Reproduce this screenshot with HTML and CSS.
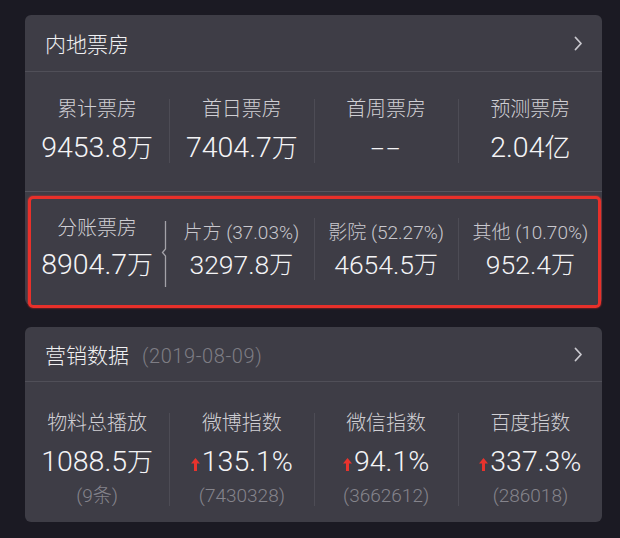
FILE: index.html
```html
<!DOCTYPE html>
<html lang="zh-CN">
<head>
    <meta charset="UTF-8">
    <meta name="viewport" content="width=device-width, initial-scale=1.0">
    <title>票房数据</title>
    <link rel="stylesheet" href="styles.css">
</head>
<body>
    <div class="card card-box">
        <div class="card-head">
            <span class="card-title">内地票房</span>
            <svg class="chevron" width="9" height="15" viewBox="0 0 9 15"><path d="M1.5 1.5 L7 7.5 L1.5 13.5" fill="none" stroke="#c9c8ce" stroke-width="1.8" stroke-linecap="round" stroke-linejoin="round"/></svg>
        </div>
        <div class="stats stats-main">
            <div class="stat">
                <div class="stat-label">累计票房</div>
                <div class="stat-value">9453.8<span class="unit">万</span></div>
            </div>
            <div class="stat">
                <div class="stat-label">首日票房</div>
                <div class="stat-value">7404.7<span class="unit">万</span></div>
            </div>
            <div class="stat">
                <div class="stat-label">首周票房</div>
                <div class="stat-value"><span class="dash">--</span></div>
            </div>
            <div class="stat">
                <div class="stat-label">预测票房</div>
                <div class="stat-value">2.04<span class="unit">亿</span></div>
            </div>
        </div>
        <!-- 分账票房，红框标注 -->
        <div class="stats stats-split">
            <div class="stat stat-total">
                <div class="stat-inner">
                    <div class="stat-label">分账票房</div>
                    <div class="stat-value">8904.7<span class="unit">万</span></div>
                </div>
                <svg class="brace" width="8" height="66" viewBox="0 0 8 66"><path d="M4.5 0 V28 L1.5 31.5 L4.5 35 V66" fill="none" stroke="#a3a2a8" stroke-width="1.3"/></svg>
            </div>
            <div class="stat stat-part">
                <div class="stat-label">片方 (37.03%)</div>
                <div class="stat-value">3297.8<span class="unit">万</span></div>
            </div>
            <div class="stat stat-part">
                <div class="stat-label">影院 (52.27%)</div>
                <div class="stat-value">4654.5<span class="unit">万</span></div>
            </div>
            <div class="stat stat-part">
                <div class="stat-label">其他 (10.70%)</div>
                <div class="stat-value">952.4<span class="unit">万</span></div>
            </div>
        </div>
    </div>

    <div class="card card-market">
        <div class="card-head">
            <span class="card-title">营销数据<span class="card-date">(2019-08-09)</span></span>
            <svg class="chevron" width="9" height="15" viewBox="0 0 9 15"><path d="M1.5 1.5 L7 7.5 L1.5 13.5" fill="none" stroke="#c9c8ce" stroke-width="1.8" stroke-linecap="round" stroke-linejoin="round"/></svg>
        </div>
        <div class="stats stats-market">
            <div class="stat">
                <div class="stat-label">物料总播放</div>
                <div class="stat-value">1088.5<span class="unit">万</span></div>
                <div class="stat-sub">(9条)</div>
            </div>
            <div class="stat">
                <div class="stat-label">微博指数</div>
                <div class="stat-value"><svg class="up" width="9" height="13" viewBox="0 0 9 13"><path d="M4.5 0 L9 5.5 H6 V13 H3 V5.5 H0 Z" fill="#e8332d"/></svg>135.1%</div>
                <div class="stat-sub">(7430328)</div>
            </div>
            <div class="stat">
                <div class="stat-label">微信指数</div>
                <div class="stat-value"><svg class="up" width="9" height="13" viewBox="0 0 9 13"><path d="M4.5 0 L9 5.5 H6 V13 H3 V5.5 H0 Z" fill="#e8332d"/></svg>94.1%</div>
                <div class="stat-sub">(3662612)</div>
            </div>
            <div class="stat">
                <div class="stat-label">百度指数</div>
                <div class="stat-value"><svg class="up" width="9" height="13" viewBox="0 0 9 13"><path d="M4.5 0 L9 5.5 H6 V13 H3 V5.5 H0 Z" fill="#e8332d"/></svg>337.3%</div>
                <div class="stat-sub">(286018)</div>
            </div>
        </div>
    </div>
</body>
</html>
```

FILE: styles.css
```css
body { margin: 0; padding: 15px 18px 15px 25px; background: #1b1a23; font-family: Roboto, "Noto Sans CJK SC", sans-serif; font-weight: 300; color: #f3f3f5; }
.card { width: 577px; background: #3e3d46; border-radius: 6px; }
.card-market { margin-top: 22px; }
.card-head { display: flex; align-items: center; justify-content: space-between; height: 56px; padding: 0 19px 0 20px; border-bottom: 1px solid #504f58; }
.card-market .card-head { height: 54px; }
.card-title { font-size: 21px; color: #f0f0f2; display: flex; align-items: baseline; }
.card-date { font-size: 20px; letter-spacing: 0.6px; color: #7e7d85; margin-left: 13px; }
.stats { display: grid; grid-template-columns: repeat(4, 1fr); }
.stat { display: flex; flex-direction: column; align-items: center; text-align: center; white-space: nowrap; }
.stat + .stat { border-left: 1px solid #4d4c55; }
.stat-label { font-size: 20px; line-height: 20px; color: #d0cfd4; }
.stat-value { font-size: 28.5px; line-height: 30px; color: #f4f4f6; display: flex; align-items: center; }
.unit { font-size: 26px; }
.dash { letter-spacing: 1px; transform: scaleX(1.7); }
.stat-sub { font-size: 19px; line-height: 20px; color: #85848c; margin-top: 9px; }

.stats-main { padding: 27px 0 28px; border-bottom: 1px solid #56555e; }
.stats-main .stat-value { margin-top: 14px; }

.stats-split { position: relative; padding: 26px 0 25px; }
.stats-split::after { content: ""; position: absolute; top: 4px; left: 3px; right: 1px; bottom: -3px; border: 3px solid #e8302a; border-radius: 5px; box-shadow: 0 0 2px #e8302a; }
.stat-total { flex-direction: row; align-items: flex-start; padding-left: 8px; }
.stat-inner { flex: 1; display: flex; flex-direction: column; align-items: center; }
.stat-total .stat-value { margin-top: 12px; }
.brace { margin: 3px 0 -7px; flex: none; }
.stat-part .stat-label { font-size: 19px; margin-top: 5px; color: #c9c8ce; }
.stat-part .stat-value { font-size: 26.5px; margin-top: 7px; }
.stat-part .unit { font-size: 24px; }
.stats-split .stat-total + .stat { border-left: none; }

.stats-market { padding: 31px 0 16px; }
.stats-market .stat-value { margin-top: 14px; }
.up { margin-right: 2px; margin-top: 4px; }
```
